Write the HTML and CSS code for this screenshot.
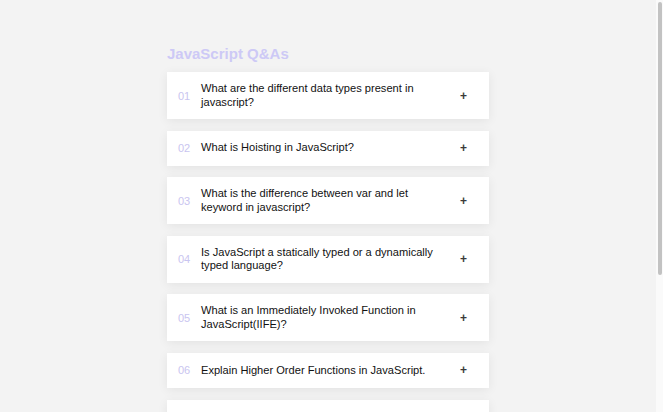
FILE: index.html
```html
<!DOCTYPE html>
<html lang="en">
<head>
<meta charset="utf-8">
<title>JavaScript Q&amp;As</title>
<link rel="stylesheet" href="styles.css">
</head>
<body>
<div class="page">
  <section class="qa">
    <h1 class="qa-title">JavaScript Q&amp;As</h1>
    <ul class="qa-list">
      <li class="qa-item"><span class="qa-num">01</span><span class="qa-q">What are the different data types present in javascript?</span><span class="qa-plus">+</span></li>
      <li class="qa-item"><span class="qa-num">02</span><span class="qa-q">What is Hoisting in JavaScript?</span><span class="qa-plus">+</span></li>
      <li class="qa-item"><span class="qa-num">03</span><span class="qa-q">What is the difference between var and let keyword in javascript?</span><span class="qa-plus">+</span></li>
      <li class="qa-item"><span class="qa-num">04</span><span class="qa-q">Is JavaScript a statically typed or a dynamically typed language?</span><span class="qa-plus">+</span></li>
      <li class="qa-item"><span class="qa-num">05</span><span class="qa-q">What is an Immediately Invoked Function in JavaScript(IIFE)?</span><span class="qa-plus">+</span></li>
      <li class="qa-item"><span class="qa-num">06</span><span class="qa-q">Explain Higher Order Functions in JavaScript.</span><span class="qa-plus">+</span></li>
      <li class="qa-item"><span class="qa-num">07</span><span class="qa-q">What is the &ldquo;this&rdquo; keyword in JavaScript?</span><span class="qa-plus">+</span></li>
    </ul>
  </section>
</div>
<div class="scrollbar"><div class="scrollbar-thumb"></div></div>
</body>
</html>
```
FILE: styles.css
```css
html, body {
  margin: 0;
  padding: 0;
  overflow: hidden;
  height: 100%;
}
body {
  background: #f3f3f3;
  font-family: "Liberation Sans", Arial, Helvetica, sans-serif;
  color: #111;
}
.page {
  padding: 44px 7px 0 0;
}
.qa {
  width: 322px;
  margin: 0 auto;
}
.qa-title {
  margin: 0 0 8px 0;
  font-size: 15px;
  line-height: 20px;
  font-weight: 700;
  color: #cdc9f6;
}
.qa-list {
  list-style: none;
  margin: 0;
  padding: 0;
  display: flex;
  flex-direction: column;
  gap: 11.6px;
}
.qa-item {
  display: flex;
  align-items: center;
  box-sizing: border-box;
  min-height: 35px;
  padding: 10px 22px 10px 11px;
  background: #fff;
  box-shadow: 0 2px 10px rgba(0, 0, 0, 0.07);
}
.qa-num {
  width: 23px;
  flex: none;
  font-size: 11px;
  color: #c9c5f0;
}
.qa-q {
  flex: 1;
  font-size: 11.1px;
  line-height: 13.5px;
  padding-right: 18px;
  color: #111;
}
.qa-plus {
  flex: none;
  width: 7px;
  text-align: center;
  font-size: 12px;
  font-weight: 700;
  color: #3a3a3a;
}
.scrollbar {
  position: fixed;
  top: 0;
  right: 0;
  width: 7px;
  height: 100%;
  background: #fafafa;
}
.scrollbar-thumb {
  margin: 2px 1px 0 2px;
  height: 273px;
  border-radius: 2px;
  background: #c2c2c2;
}
```
